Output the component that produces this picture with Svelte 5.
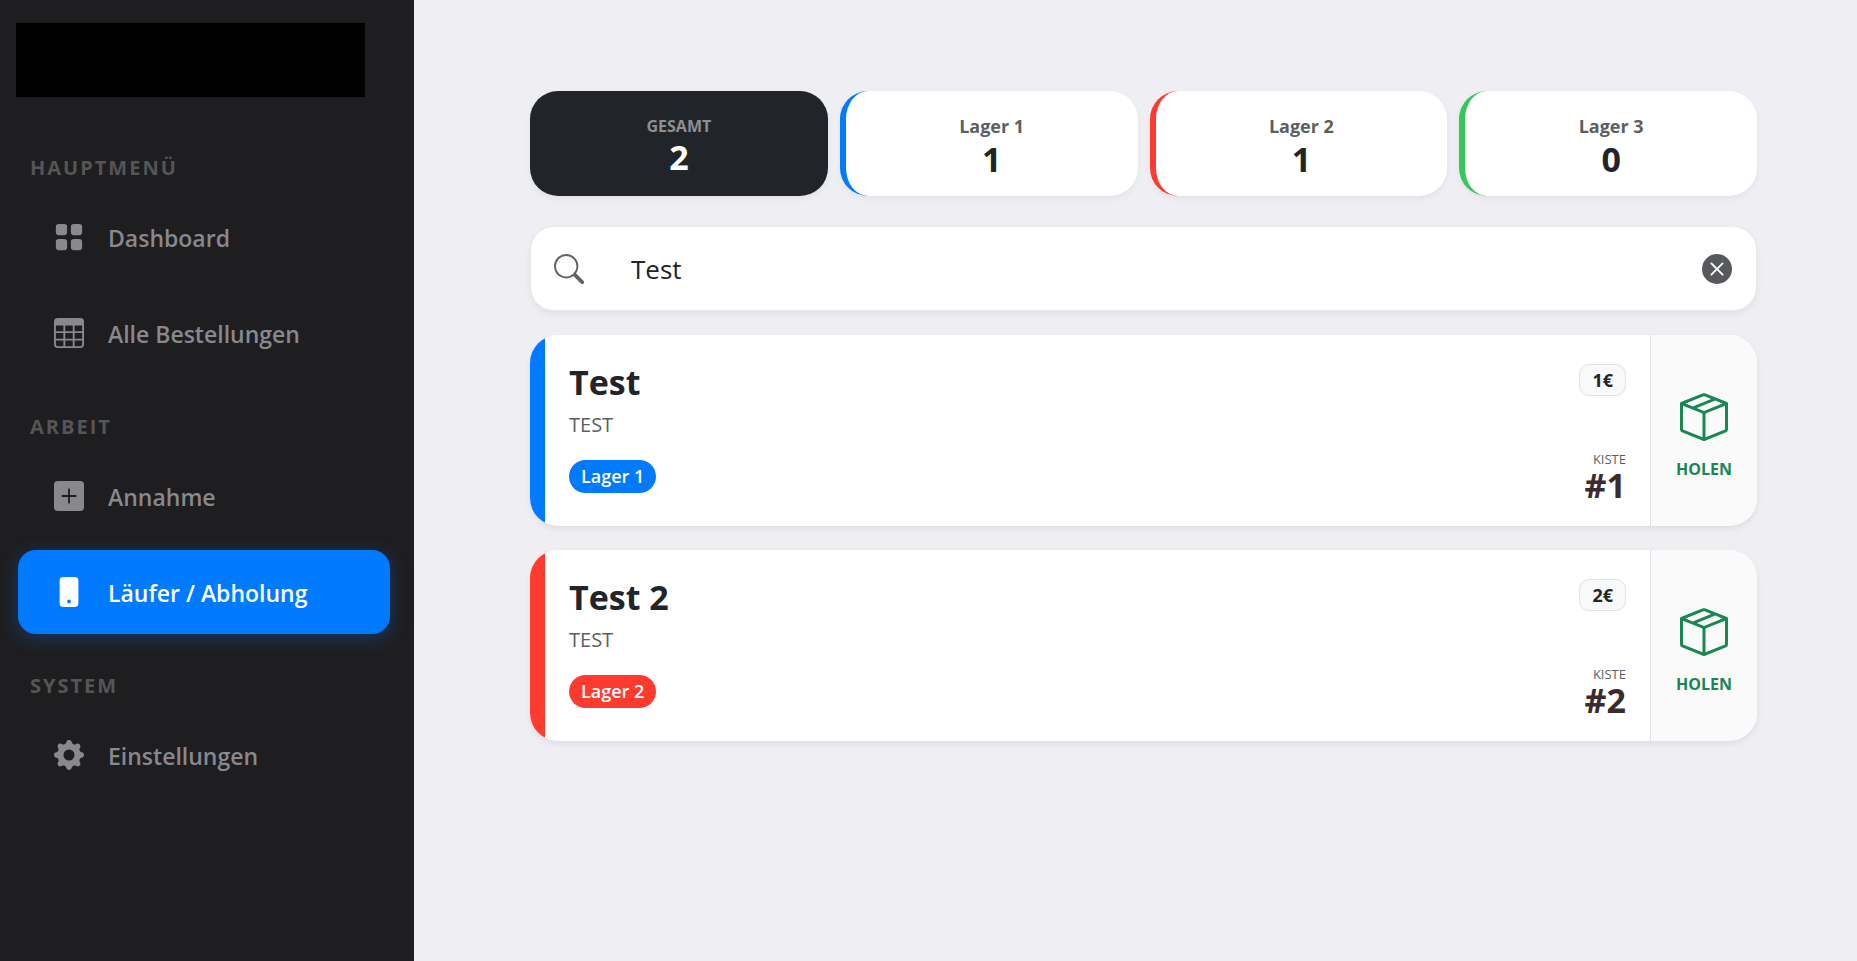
<script lang="ts">
	type MenuItem = { label: string; icon: string; active?: boolean };

	const icons: Record<string, string> = {
		grid: 'M1 2.5A1.5 1.5 0 0 1 2.5 1h3A1.5 1.5 0 0 1 7 2.5v3A1.5 1.5 0 0 1 5.5 7h-3A1.5 1.5 0 0 1 1 5.5zm8 0A1.5 1.5 0 0 1 10.5 1h3A1.5 1.5 0 0 1 15 2.5v3A1.5 1.5 0 0 1 13.5 7h-3A1.5 1.5 0 0 1 9 5.5zm-8 8A1.5 1.5 0 0 1 2.5 9h3A1.5 1.5 0 0 1 7 10.5v3A1.5 1.5 0 0 1 5.5 15h-3A1.5 1.5 0 0 1 1 13.5zm8 0A1.5 1.5 0 0 1 10.5 9h3a1.5 1.5 0 0 1 1.5 1.5v3a1.5 1.5 0 0 1-1.5 1.5h-3A1.5 1.5 0 0 1 9 13.5z',
		table: 'M0 2a2 2 0 0 1 2-2h12a2 2 0 0 1 2 2v12a2 2 0 0 1-2 2H2a2 2 0 0 1-2-2zm15 2h-4v3h4zm0 4h-4v3h4zm0 4h-4v3h3a1 1 0 0 0 1-1zm-5 3v-3H6v3zm-5 0v-3H1v2a1 1 0 0 0 1 1zm-4-4h4V8H1zm0-4h4V4H1zm5-3v3h4V4zm4 4H6v3h4z',
		plus: 'M2 0a2 2 0 0 0-2 2v12a2 2 0 0 0 2 2h12a2 2 0 0 0 2-2V2a2 2 0 0 0-2-2zm6.5 4.5v3h3a.5.5 0 0 1 0 1h-3v3a.5.5 0 0 1-1 0v-3h-3a.5.5 0 0 1 0-1h3v-3a.5.5 0 0 1 1 0',
		phone: 'M3 2a2 2 0 0 1 2-2h6a2 2 0 0 1 2 2v12a2 2 0 0 1-2 2H5a2 2 0 0 1-2-2zm6 11a1 1 0 1 0-2 0 1 1 0 0 0 2 0',
		gear: 'M9.405 1.05c-.413-1.4-2.397-1.4-2.81 0l-.1.34a1.464 1.464 0 0 1-2.105.872l-.31-.17c-1.283-.698-2.686.705-1.987 1.987l.169.311c.446.82.023 1.841-.872 2.105l-.34.1c-1.4.413-1.4 2.397 0 2.81l.34.1a1.464 1.464 0 0 1 .872 2.105l-.17.31c-.698 1.283.705 2.686 1.987 1.987l.311-.169a1.464 1.464 0 0 1 2.105.872l.1.34c.413 1.4 2.397 1.4 2.81 0l.1-.34a1.464 1.464 0 0 1 2.105-.872l.31.17c1.283.698 2.686-.705 1.987-1.987l-.169-.311a1.464 1.464 0 0 1 .872-2.105l.34-.1c1.4-.413 1.4-2.397 0-2.81l-.34-.1a1.464 1.464 0 0 1-.872-2.105l.17-.31c.698-1.283-.705-2.686-1.987-1.987l-.311.169a1.464 1.464 0 0 1-2.105-.872zM8 10.93a2.929 2.929 0 1 1 0-5.86 2.929 2.929 0 0 1 0 5.858z',
		search: 'M11.742 10.344a6.5 6.5 0 1 0-1.397 1.398h-.001q.044.06.098.115l3.85 3.85a1 1 0 0 0 1.415-1.414l-3.85-3.85a1 1 0 0 0-.115-.1zM12 6.5a5.5 5.5 0 1 1-11 0 5.5 5.5 0 0 1 11 0',
		clear: 'M16 8A8 8 0 1 1 0 8a8 8 0 0 1 16 0M5.354 4.646a.5.5 0 1 0-.708.708L7.293 8l-2.647 2.646a.5.5 0 0 0 .708.708L8 8.707l2.646 2.647a.5.5 0 0 0 .708-.708L8.707 8l2.647-2.646a.5.5 0 0 0-.708-.708L8 7.293z',
		box: 'M8.186 1.113a.5.5 0 0 0-.372 0L1.846 3.5l2.404.961L10.404 2zm3.564 1.426L5.596 5 8 5.961 14.154 3.5zm3.25 1.7-6.5 2.6v7.922l6.5-2.6V4.24zM7.5 14.762V6.838L1 4.239v7.923zM7.443.184a1.5 1.5 0 0 1 1.114 0l7.129 2.852A.5.5 0 0 1 16 3.5v8.662a1 1 0 0 1-.629.928l-7.185 2.874a.5.5 0 0 1-.372 0L.63 13.09a1 1 0 0 1-.63-.928V3.5a.5.5 0 0 1 .314-.464z'
	};

	const menu: { title: string; items: MenuItem[] }[] = [
		{
			title: 'Hauptmenü',
			items: [
				{ label: 'Dashboard', icon: 'grid' },
				{ label: 'Alle Bestellungen', icon: 'table' }
			]
		},
		{
			title: 'Arbeit',
			items: [
				{ label: 'Annahme', icon: 'plus' },
				{ label: 'Läufer / Abholung', icon: 'phone', active: true }
			]
		},
		{
			title: 'System',
			items: [{ label: 'Einstellungen', icon: 'gear' }]
		}
	];

	const stores = [
		{ name: 'Lager 1', count: 1, color: 'blue' },
		{ name: 'Lager 2', count: 1, color: 'red' },
		{ name: 'Lager 3', count: 0, color: 'green' }
	];

	const orders = [
		{ title: 'Test', note: 'TEST', store: 'Lager 1', price: '1€', box: 1, color: 'blue' },
		{ title: 'Test 2', note: 'TEST', store: 'Lager 2', price: '2€', box: 2, color: 'red' }
	];

	let query = $state('Test');

	const total = stores.reduce((sum, s) => sum + s.count, 0);
	const visible = $derived(
		orders.filter((o) => o.title.toLowerCase().includes(query.trim().toLowerCase()))
	);
</script>

{#snippet icon(name: string)}
	<svg class="icon" viewBox="0 0 16 16" fill="currentColor" aria-hidden="true">
		<path fill-rule="evenodd" d={icons[name]} />
	</svg>
{/snippet}

<div class="layout">
	<aside class="sidebar">
		<div class="brand"></div>
		<nav>
			{#each menu as group}
				<h2>{group.title}</h2>
				<ul>
					{#each group.items as item}
						<li>
							<a href="#{item.icon}" class:active={item.active}>
								{@render icon(item.icon)}
								<span>{item.label}</span>
							</a>
						</li>
					{/each}
				</ul>
			{/each}
		</nav>
	</aside>

	<main>
		<section class="stats">
			<div class="stat total">
				<span class="stat-label">GESAMT</span>
				<strong>{total}</strong>
			</div>
			{#each stores as store}
				<div class="stat {store.color}">
					<span class="stat-label">{store.name}</span>
					<strong>{store.count}</strong>
				</div>
			{/each}
		</section>

		<div class="search">
			{@render icon('search')}
			<input type="text" aria-label="Suche" bind:value={query} />
			<button type="button" aria-label="Suche leeren" onclick={() => (query = '')}>
				{@render icon('clear')}
			</button>
		</div>

		<section class="orders">
			{#each visible as order}
				<article class="order {order.color}">
					<div class="details">
						<h3>{order.title}</h3>
						<p>{order.note}</p>
						<span class="pill">{order.store}</span>
					</div>
					<div class="meta">
						<span class="price">{order.price}</span>
						<div class="box">
							<small>KISTE</small>
							<strong>#{order.box}</strong>
						</div>
					</div>
					<button type="button" class="fetch">
						{@render icon('box')}
						<span>HOLEN</span>
					</button>
				</article>
			{/each}
		</section>
	</main>
</div>

<style>
	:global(body) {
		background: #efeef3;
	}

	.layout {
		display: flex;
		min-height: 100vh;
		font-family: 'Open Sans', 'Noto Sans', sans-serif;
		color: #212529;
	}

	.layout *,
	.layout *::before {
		box-sizing: border-box;
	}

	.blue {
		--accent: #007aff;
	}

	.red {
		--accent: #ff3b30;
	}

	.green {
		--accent: #34c759;
	}

	.icon {
		display: block;
		flex-shrink: 0;
		width: 30px;
		height: 30px;
	}

	button {
		border: 0;
		font: inherit;
		cursor: pointer;
	}

	/* Sidebar */
	.sidebar {
		flex: 0 0 414px;
		padding: 23px 24px 24px 18px;
		background: #1e1e20;
	}

	.brand {
		width: 349px;
		height: 74px;
		margin-left: -2px;
		margin-bottom: 57px;
		background: #000;
	}

	h2 {
		margin: 0;
		padding: 0 12px 13px;
		font-size: 20px;
		line-height: 28px;
		font-weight: 700;
		letter-spacing: 2px;
		text-transform: uppercase;
		color: #555;
	}

	ul {
		display: flex;
		flex-direction: column;
		gap: 12px;
		margin: 0 0 38px;
		padding: 0;
		list-style: none;
	}

	nav a {
		display: flex;
		align-items: center;
		gap: 24px;
		height: 84px;
		padding: 0 36px;
		border-radius: 18px;
		font-size: 23px;
		font-weight: 600;
		color: #88888d;
		text-decoration: none;
	}

	nav span {
		padding-top: 2px;
	}

	nav a.active {
		background: #007aff;
		color: #fff;
		box-shadow: 0 4px 18px rgba(0, 122, 255, 0.3);
	}

	/* Content */
	main {
		flex: 1;
		min-width: 0;
		padding: 91px 100px 40px 116px;
	}

	.stats {
		display: grid;
		grid-template-columns: repeat(4, 1fr);
		gap: 12px;
		margin-bottom: 30px;
	}

	.stat {
		display: flex;
		flex-direction: column;
		align-items: center;
		justify-content: center;
		height: 105px;
		padding-top: 2px;
		border-left: 6px solid var(--accent);
		border-radius: 28px;
		background: #fff;
		box-shadow: 0 3px 6px rgba(0, 0, 0, 0.05);
	}

	.stat.total {
		border-left: 0;
		background: #212529;
		color: #fff;
	}

	.stat-label {
		font-size: 18px;
		line-height: 28px;
		font-weight: 700;
		color: #5c5f62;
	}

	.total .stat-label {
		font-size: 16px;
		line-height: 24px;
		color: #8e8e93;
	}

	.stat strong {
		font-size: 34px;
		line-height: 38px;
		font-weight: 700;
	}

	.search {
		display: flex;
		align-items: center;
		gap: 24px;
		height: 85px;
		margin-bottom: 24px;
		padding: 0 24px 0 23px;
		border: 1px solid #e9e9ee;
		border-radius: 24px;
		background: #fff;
		box-shadow: 0 3px 6px rgba(0, 0, 0, 0.06);
		color: #5c6468;
	}

	.search input {
		flex: 1;
		min-width: 0;
		padding: 0 24px 0 23px;
		border: 0;
		outline: 0;
		background: none;
		font: 26px / 40px 'Open Sans', 'Noto Sans', sans-serif;
		color: #212529;
	}

	.search button {
		padding: 0;
		background: none;
		color: #58595d;
	}

	.orders {
		display: flex;
		flex-direction: column;
		gap: 24px;
	}

	.order {
		display: flex;
		height: 191px;
		border-radius: 28px;
		background: #fff;
		box-shadow: 0 3px 6px rgba(0, 0, 0, 0.07);
		overflow: hidden;
	}

	.order::before {
		content: '';
		width: 15px;
		background: var(--accent);
	}

	.details {
		flex: 1;
		padding: 24px;
	}

	h3 {
		margin: 0 0 2px;
		font-size: 34px;
		line-height: 46px;
		font-weight: 700;
	}

	p {
		margin: 0 0 17px;
		font-size: 20px;
		line-height: 36px;
		color: #5c5f62;
	}

	.pill {
		display: inline-block;
		padding: 0 12px;
		border-radius: 17px;
		background: var(--accent);
		font-size: 18px;
		line-height: 33px;
		font-weight: 600;
		color: #fff;
	}

	.meta {
		display: flex;
		flex-direction: column;
		align-items: flex-end;
		justify-content: space-between;
		padding: 29px 24px 23px;
	}

	.price {
		padding: 0 12px;
		border: 1px solid #dee2e6;
		border-radius: 10px;
		background: #f8f9fa;
		font-size: 18px;
		line-height: 30px;
		font-weight: 700;
	}

	.box {
		display: flex;
		flex-direction: column;
		align-items: flex-end;
	}

	.box small {
		font-size: 13px;
		line-height: 16px;
		color: #5c5f62;
	}

	.box strong {
		font-size: 34px;
		line-height: 36px;
		font-weight: 700;
		color: #3a2c2c;
	}

	.fetch {
		display: flex;
		flex-direction: column;
		align-items: center;
		justify-content: center;
		gap: 16px;
		width: 107px;
		padding: 12px 0 0;
		border-left: 1px solid #dee2e6;
		background: #fafafa;
		font-size: 16px;
		line-height: 24px;
		font-weight: 700;
		color: #198754;
	}

	.fetch .icon {
		width: 48px;
		height: 48px;
	}
</style>
